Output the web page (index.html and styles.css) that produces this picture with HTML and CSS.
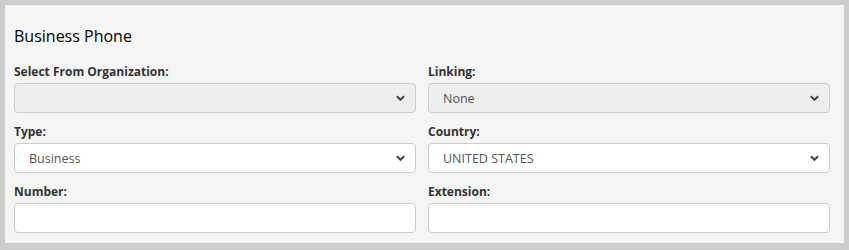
FILE: index.html
```html
<!DOCTYPE html>
<html lang="en">
<head>
    <meta charset="UTF-8">
    <title>Business Phone</title>
    <link rel="stylesheet" href="styles.css">
</head>
<body>
    <div class="panel">
        <h2 class="panel-title">Business Phone</h2>

        <div class="form-grid">
            <div class="field">
                <label>Select From Organization:</label>
                <div class="select-wrap">
                    <select class="control" disabled>
                        <option></option>
                    </select>
                    <svg class="chevron" viewBox="0 0 10 6"><path d="M1 1 L5 5 L9 1" /></svg>
                </div>
            </div>
            <div class="field">
                <label>Linking:</label>
                <div class="select-wrap">
                    <select class="control" disabled>
                        <option>None</option>
                    </select>
                    <svg class="chevron" viewBox="0 0 10 6"><path d="M1 1 L5 5 L9 1" /></svg>
                </div>
            </div>

            <div class="field">
                <label>Type:</label>
                <div class="select-wrap">
                    <select class="control">
                        <option>Business</option>
                    </select>
                    <svg class="chevron" viewBox="0 0 10 6"><path d="M1 1 L5 5 L9 1" /></svg>
                </div>
            </div>
            <div class="field">
                <label>Country:</label>
                <div class="select-wrap">
                    <select class="control">
                        <option>UNITED STATES</option>
                    </select>
                    <svg class="chevron" viewBox="0 0 10 6"><path d="M1 1 L5 5 L9 1" /></svg>
                </div>
            </div>

            <div class="field">
                <label>Number:</label>
                <input type="text" class="control">
            </div>
            <div class="field">
                <label>Extension:</label>
                <input type="text" class="control">
            </div>
        </div>
    </div>
</body>
</html>
```

FILE: styles.css
```css
/* Page background */
html, body {
    margin: 0;
    background-color: #cccccc;
    font-family: "Open Sans", Arial, sans-serif;
}

body {
    padding: 5px 5px 7px 5px;
}

/* Grey card holding the form */
.panel {
    background-color: #f5f5f5;
    padding: 20px 14px 10px 9px;
}

.panel-title {
    margin: 0 0 16px 0;
    font-size: 16px;
    font-weight: 500;
    line-height: 22px;
    color: #000;
}

/* Two column form */
.form-grid {
    display: grid;
    grid-template-columns: 1fr 1fr;
    column-gap: 12px;
    row-gap: 10px;
}

.field label {
    display: block;
    font-size: 12px;
    font-weight: 700;
    line-height: 17px;
    color: #333;
    margin-bottom: 3px;
}

.select-wrap {
    position: relative;
}

.control {
    display: block;
    box-sizing: border-box;
    width: 100%;
    height: 30px;
    padding: 0 14px;
    border: 1px solid #cccccc;
    border-radius: 4px;
    background-color: white;
    font-family: "Open Sans", Arial, sans-serif;
    font-size: 12.5px;
    color: #555;
    appearance: none;
    -webkit-appearance: none;
    outline: none;
}

.control:disabled {
    background-color: #eeeeee;
    color: #555;
    opacity: 1;
}

/* Small arrow on the right of each select */
.chevron {
    position: absolute;
    right: 11px;
    top: 12px;
    width: 9px;
    height: 6px;
    pointer-events: none;
}

.chevron path {
    fill: none;
    stroke: #444;
    stroke-width: 2.2;
}
```
